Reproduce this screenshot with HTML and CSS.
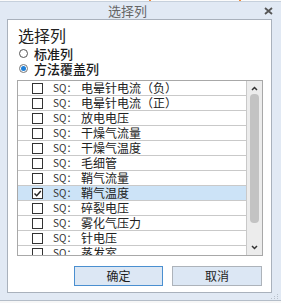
FILE: index.html
```html
<!DOCTYPE html>
<html lang="zh-CN">

<head>
    <meta charset="UTF-8">
    <meta name="viewport" content="width=device-width, initial-scale=1.0">
    <title>选择列</title>
    <link rel="stylesheet" href="styles.css">
</head>

<body>
    <div class="under-top">
        <span class="tick tick-a"></span>
        <span class="tick tick-b"></span>
    </div>
    <div class="dialog">
        <div class="titlebar">
            <div class="title">选择列</div>
            <div class="close">
                <svg width="9" height="8" viewBox="0 0 9 8">
                    <path d="M1 1 L8 7 M8 1 L1 7" stroke="#555" stroke-width="1.8" fill="none" />
                </svg>
            </div>
        </div>
        <div class="panel">
            <div class="heading">选择列</div>
            <div class="radio-row">
                <span class="radio"></span>
                <span class="radio-label">标准列</span>
            </div>
            <div class="radio-row">
                <span class="radio checked"></span>
                <span class="radio-label">方法覆盖列</span>
            </div>
            <div class="list">
                <div class="rows">
                    <div class="row"><span class="check"></span><span class="prefix">SQ：</span><span class="name">电晕针电流（负）</span></div>
                    <div class="row"><span class="check"></span><span class="prefix">SQ：</span><span class="name">电晕针电流（正）</span></div>
                    <div class="row"><span class="check"></span><span class="prefix">SQ：</span><span class="name">放电电压</span></div>
                    <div class="row"><span class="check"></span><span class="prefix">SQ：</span><span class="name">干燥气流量</span></div>
                    <div class="row"><span class="check"></span><span class="prefix">SQ：</span><span class="name">干燥气温度</span></div>
                    <div class="row"><span class="check"></span><span class="prefix">SQ：</span><span class="name">毛细管</span></div>
                    <div class="row"><span class="check"></span><span class="prefix">SQ：</span><span class="name">鞘气流量</span></div>
                    <div class="row selected">
                        <span class="check">
                            <svg width="9" height="9" viewBox="0 0 9 9">
                                <path d="M1.5 4.5 L3.7 6.8 L7.8 2" stroke="#222" stroke-width="1.4" fill="none" />
                            </svg>
                        </span><span class="prefix">SQ：</span><span class="name">鞘气温度</span>
                    </div>
                    <div class="row"><span class="check"></span><span class="prefix">SQ：</span><span class="name">碎裂电压</span></div>
                    <div class="row"><span class="check"></span><span class="prefix">SQ：</span><span class="name">雾化气压力</span></div>
                    <div class="row"><span class="check"></span><span class="prefix">SQ：</span><span class="name">针电压</span></div>
                    <div class="row"><span class="check"></span><span class="prefix">SQ：</span><span class="name">蒸发室</span></div>
                </div>
                <div class="scrollbar">
                    <svg class="arrow" width="7" height="5" viewBox="0 0 7 5">
                        <path d="M1 4 L3.5 1.5 L6 4" stroke="#333" stroke-width="1.5" fill="none" />
                    </svg>
                    <div class="thumb"></div>
                    <div class="track-rest"></div>
                    <svg class="arrow" width="7" height="5" viewBox="0 0 7 5">
                        <path d="M1 1 L3.5 3.5 L6 1" stroke="#333" stroke-width="1.5" fill="none" />
                    </svg>
                </div>
            </div>
            <div class="buttons">
                <button class="btn btn-ok">确定</button>
                <button class="btn btn-cancel">取消</button>
            </div>
        </div>
        <div class="grip">
            <svg width="8" height="6" viewBox="0 0 8 6">
                <rect x="6" y="0" width="1" height="1" fill="#b7c0cb" />
                <rect x="3" y="2" width="1" height="1" fill="#b7c0cb" />
                <rect x="6" y="2" width="1" height="1" fill="#b7c0cb" />
                <rect x="0" y="4" width="1" height="1" fill="#b7c0cb" />
                <rect x="3" y="4" width="1" height="1" fill="#b7c0cb" />
                <rect x="6" y="4" width="1" height="1" fill="#b7c0cb" />
            </svg>
        </div>
    </div>
    <div class="under-bottom"></div>
</body>

</html>
```

FILE: styles.css
```css
body,
html {
    margin: 0;
    padding: 0;
    width: 281px;
    height: 303px;
    overflow: hidden;
    font-family: "Noto Sans CJK SC", "Noto Sans", sans-serif;
    color: #1e1e1e;
    background-color: #f4f4f4;
}

.under-top {
    height: 1px;
    border-bottom: 1px solid #c6d0dc;
    background-color: #fbfbfb;
    display: flex;
}

.tick {
    width: 2px;
    height: 1px;
    background-color: #f08a3c;
}

.tick-a {
    margin-left: 149px;
}

.tick-b {
    margin-left: 88px;
}

.dialog {
    height: 298px;
    background-color: #e1e9f4;
    border-bottom: 1px solid #b4bdc8;
    display: flex;
    flex-direction: column;
}

.titlebar {
    height: 17px;
    display: flex;
    align-items: center;
}

.title {
    flex-grow: 1;
    text-align: center;
    font-size: 13px;
    line-height: 17px;
    color: #666;
}

.close {
    width: 26px;
    display: flex;
    justify-content: center;
    padding-top: 1px;
}

.panel {
    margin: 0 9px 0 7px;
    height: 273px;
    border: 1px solid #a9b1bc;
    background-color: #fff;
    padding: 0 8px 0 9px;
    display: flex;
    flex-direction: column;
}

.heading {
    margin: 5px 0 1px 1px;
    font-size: 16px;
    line-height: 20px;
    height: 20px;
    color: #222;
}

.radio-row {
    height: 15px;
    display: flex;
    align-items: center;
}

.radio-label {
    font-size: 13px;
    line-height: 15px;
    font-weight: 500;
    color: #1a1a1a;
}

.radio {
    width: 7px;
    height: 7px;
    border: 1px solid #555;
    border-radius: 50%;
    margin: 0 6px 0 2px;
    display: flex;
    align-items: center;
    justify-content: center;
}

.radio.checked {
    border-color: #777;
}

.radio.checked::after {
    content: "";
    width: 5px;
    height: 5px;
    border-radius: 50%;
    background-color: #1e7fd8;
}

.list {
    margin-top: 4px;
    height: 174px;
    border: 1px solid #a8a8a8;
    display: flex;
    overflow: hidden;
}

.rows {
    flex-grow: 1;
    border-right: 1px solid #c9c9c9;
    overflow: hidden;
}

.row {
    height: 14px;
    border-bottom: 1px solid #c9c9c9;
    display: flex;
    align-items: center;
    white-space: nowrap;
}

.row.selected {
    background-color: #cce3f7;
}

.check {
    width: 9px;
    height: 9px;
    border: 1px solid #333;
    background-color: #fff;
    margin: 0 10px 0 14px;
    display: flex;
    align-items: center;
    justify-content: center;
    flex-shrink: 0;
}

.prefix {
    width: 28px;
    flex-shrink: 0;
    font-size: 10px;
    line-height: 14px;
    color: #333;
}

.name {
    font-size: 12px;
    line-height: 14px;
    color: #222;
}

.scrollbar {
    width: 15px;
    background-color: #ececec;
    display: flex;
    flex-direction: column;
    align-items: center;
}

.arrow {
    margin: 5px 0;
    flex-shrink: 0;
}

.thumb {
    width: 9px;
    height: 129px;
    margin-top: -2px;
    border-radius: 4px;
    background-color: #c3c3c3;
}

.track-rest {
    flex-grow: 1;
}

.buttons {
    margin-top: 10px;
    margin-right: 1px;
    display: flex;
    justify-content: flex-end;
    gap: 9px;
}

.btn {
    height: 20px;
    padding: 0;
    font-family: "Noto Sans CJK SC", "Noto Sans", sans-serif;
    font-size: 12px;
    line-height: 18px;
    color: #1e1e1e;
    background-color: #dce7f4;
    border: 1px solid #adb3ba;
}

.btn-ok {
    width: 89px;
    border-color: #4a8fd0;
}

.btn-cancel {
    width: 90px;
}

.grip {
    display: flex;
    justify-content: flex-end;
    padding: 1px 2px 0 0;
}

.under-bottom {
    height: 2px;
    background-color: #f7f7f7;
}
```
